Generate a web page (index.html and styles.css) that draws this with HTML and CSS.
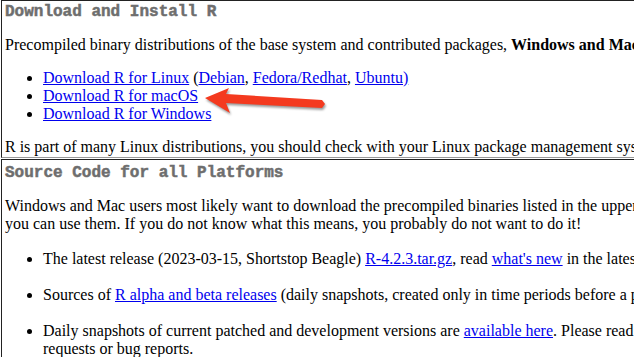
FILE: index.html
```html
<!DOCTYPE html>
<html lang="en">

<head>
  <meta charset="UTF-8">
  <title>The Comprehensive R Archive Network</title>
  <link rel="stylesheet" href="styles.css">
</head>

<body>

  <div class="page">

    <div class="cell">
      <h2>Download and Install R</h2>
      <p>Precompiled binary distributions of the base system and contributed packages, <b>Windows and Mac</b> users most likely want one of these versions of R:</p>
      <ul>
        <li><a href="#">Download R for Linux</a> (<a href="#">Debian</a>, <a href="#">Fedora/Redhat</a>, <a href="#">Ubuntu)</a></li>
        <li><a href="#">Download R for macOS</a></li>
        <li><a href="#">Download R for Windows</a></li>
      </ul>
      <p>R is part of many Linux distributions, you should check with your Linux package management system in addition to the link above.</p>
    </div>

    <div class="cell">
      <h2>Source Code for all Platforms</h2>
      <p>Windows and Mac users most likely want to download the precompiled binaries listed in the upper box, not the source code. The sources have to be compiled before<br>you can use them. If you do not know what this means, you probably do not want to do it!</p>
      <ul class="spaced">
        <li>The latest release (2023-03-15, Shortstop Beagle) <a href="#">R-4.2.3.tar.gz</a>, read <a href="#">what's new</a> in the latest version.</li>
        <li>Sources of <a href="#">R alpha and beta releases</a> (daily snapshots, created only in time periods before a planned release).</li>
        <li>Daily snapshots of current patched and development versions are <a href="#">available here</a>. Please read about new features and bug fixes before filing corresponding feature<br>requests or bug reports.</li>
      </ul>
    </div>

    <!-- annotation arrow -->
    <svg class="arrow" width="130" height="34" viewBox="0 0 130 34">
      <polygon points="4,13 28,3 25,9 121,15 124,19 121,23 25,18 29,28" fill="#f43a1f" />
    </svg>

  </div>

</body>

</html>
```

FILE: styles.css
```css
body {
  margin: 0;
  overflow: hidden;
  font-family: "Liberation Serif", "Times New Roman", serif;
  font-size: 16px;
  line-height: 18px;
  color: #000;
  background-color: #fff;
}

.page {
  position: relative;
  padding-left: 1px;
}

.cell {
  width: 1200px;
  border: 1px solid;
  border-color: #222 #999 #999 #222;
  padding: 4px 3px 1px;
  white-space: nowrap;
}

.cell:first-child {
  padding-top: 2px;
}

.cell + .cell {
  margin-top: 1px;
}

h2 {
  font-family: "Liberation Mono", "Courier New", monospace;
  font-size: 16px;
  font-weight: bold;
  color: #6e6e6e;
  -webkit-text-stroke: 0.5px #6e6e6e;
  margin: 0;
}

p {
  margin: 15px 0 0;
}

ul {
  margin: 15px 0 0;
  padding-left: 38px;
}

ul.spaced {
  margin-top: 17px;
}

ul.spaced li {
  margin-bottom: 18px;
}

a {
  color: #00e;
}

.arrow {
  position: absolute;
  left: 201px;
  top: 85px;
  filter: drop-shadow(1px 2px 1px rgba(0, 0, 0, 0.4));
}
```
